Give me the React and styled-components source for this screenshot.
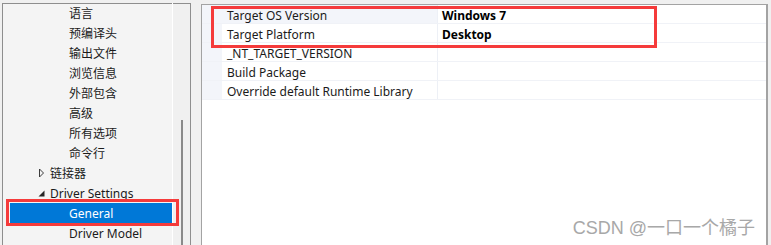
import React from 'react';
import styled, { createGlobalStyle } from 'styled-components';

const GlobalStyle = createGlobalStyle`
  html, body {
    margin: 0;
    padding: 0;
    background: #f0f0f0;
  }
  body {
    font-family: "Noto Sans", "Noto Sans CJK SC", sans-serif;
    font-size: 12px;
    color: #1b1b1b;
  }
`;

const Page = styled.div`
  position: relative;
  display: flex;
  align-items: flex-start;
  height: 245px;
  padding: 3px 0 0 2px;
  box-sizing: border-box;
  overflow: hidden;
`;

const LeftPane = styled.div`
  display: flex;
  height: 242px;
  border: 1px solid #8e8e8e;
  border-bottom: none;
  background: #f4f4f4;
`;

const Tree = styled.div`
  position: relative;
  width: 169px;
  border-right: 1px solid #ffffff;
  margin-top: -1px;
`;

const TreeRow = styled.div`
  position: relative;
  display: flex;
  align-items: center;
  height: 20px;
  margin-left: ${p => (p.$selected ? 7 : 0)}px;
  padding-left: ${p => (p.$selected ? 59 : p.$level === 2 ? 66 : 30)}px;
  background: ${p => (p.$selected ? '#0078d7' : 'transparent')};
  color: ${p => (p.$selected ? '#ffffff' : '#1b1b1b')};
  white-space: nowrap;
`;

const Arrow = styled.span`
  display: inline-flex;
  align-items: center;
  justify-content: center;
  width: 17px;
  height: 20px;
`;

const ScrollTrack = styled.div`
  position: relative;
  width: 17px;
  background: #f0f0f0;
  display: flex;
  justify-content: center;
`;

const Thumb = styled.div`
  width: 2px;
  margin-top: 116px;
  height: 130px;
  background: #8a8a8a;
`;

const RightPane = styled.div`
  flex: 0 0 auto;
  width: 564px;
  height: 241px;
  margin: 1px 0 0 10px;
  border: 1px solid #a3a3a3;
  border-right-width: 2px;
  border-bottom: none;
  background: #ffffff;
`;

const Grid = styled.div`
  position: relative;
`;

const GridRow = styled.div`
  display: flex;
  height: 19px;
  box-sizing: border-box;
  border-bottom: 1px solid #f0f2f7;
`;

const Gutter = styled.div`
  width: 20px;
  background: #f3f5fa;
`;

const NameCell = styled.div`
  width: 210px;
  padding: 2px 0 0 5px;
  line-height: 18px;
  border-right: 1px solid #edf0f6;
  background: ${p => (p.$active ? '#f3f5fa' : '#ffffff')};
  white-space: nowrap;
  overflow: hidden;
`;

const ValueCell = styled.div`
  flex: 1;
  padding: 2px 0 0 4px;
  line-height: 18px;
  font-weight: 700;
  color: #000000;
  overflow: hidden;
`;

const Callout = styled.div`
  position: absolute;
  z-index: 2;
  top: ${p => p.$top}px;
  left: ${p => p.$left}px;
  width: ${p => p.$width}px;
  height: ${p => p.$height}px;
  border: 3px solid #f53b3b;
  box-sizing: border-box;
  pointer-events: none;
`;

const Watermark = styled.div`
  position: absolute;
  right: 16px;
  bottom: 6px;
  font-family: "Liberation Sans", "Noto Sans CJK SC", sans-serif;
  font-size: 18px;
  color: #a8a8a8;
`;

const Collapsed = () => (
  <svg width="7" height="10" viewBox="0 0 7 10">
    <path d="M1.5 1 L5.5 5 L1.5 9 Z" fill="none" stroke="#3c3c3c" strokeWidth="1" />
  </svg>
);

const Expanded = () => (
  <svg width="7" height="7" viewBox="0 0 7 7">
    <path d="M6.5 0.5 L6.5 6.5 L0.5 6.5 Z" fill="#262626" />
  </svg>
);

const subItems = ['语言', '预编译头', '输出文件', '浏览信息', '外部包含', '高级', '所有选项', '命令行'];

const properties = [
  { name: 'Target OS Version', value: 'Windows 7' },
  { name: 'Target Platform', value: 'Desktop' },
  { name: '_NT_TARGET_VERSION', value: '' },
  { name: 'Build Package', value: '' },
  { name: 'Override default Runtime Library', value: '' },
];

export default function App() {
  return (
    <>
      <GlobalStyle />
      <Page>
        <LeftPane>
          <Tree>
            {subItems.map(label => (
              <TreeRow key={label} $level={2}>{label}</TreeRow>
            ))}
            <TreeRow $level={1}>
              <Arrow><Collapsed /></Arrow>链接器
            </TreeRow>
            <TreeRow $level={1}>
              <Arrow><Expanded /></Arrow>Driver Settings
            </TreeRow>
            <TreeRow $level={2} $selected>
              General
              <Callout $top={-4} $left={-4} $width={173} $height={27} />
            </TreeRow>
            <TreeRow $level={2}>Driver Model</TreeRow>
          </Tree>
          <ScrollTrack>
            <Thumb />
          </ScrollTrack>
        </LeftPane>
        <RightPane>
          <Grid>
            {properties.map((p, i) => (
              <GridRow key={p.name}>
                <Gutter />
                <NameCell $active={i === 0}>{p.name}</NameCell>
                <ValueCell>{p.value}</ValueCell>
              </GridRow>
            ))}
            <Callout $top={1} $left={9} $width={446} $height={42} />
          </Grid>
        </RightPane>
        <Watermark>CSDN @一口一个橘子</Watermark>
      </Page>
    </>
  );
}
